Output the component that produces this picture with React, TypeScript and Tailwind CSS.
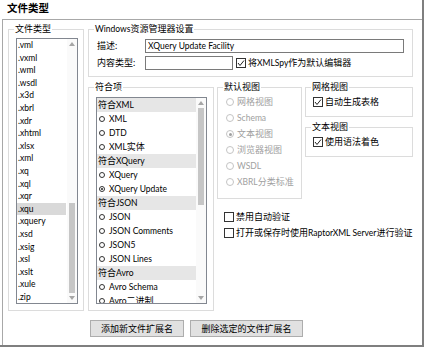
import React from 'react';

const fileTypes = [
  '.vml', '.vxml', '.wml', '.wsdl', '.x3d', '.xbrl', '.xdr', '.xhtml', '.xlsx', '.xml', '.xq',
  '.xql', '.xqr', '.xqu', '.xquery', '.xsd', '.xsig', '.xsl', '.xslt', '.xule', '.zip',
];

type Row = { label: string; header?: boolean; checked?: boolean };

const conformance: Row[] = [
  { label: '符合XML', header: true },
  { label: 'XML' },
  { label: 'DTD' },
  { label: 'XML实体' },
  { label: '符合XQuery', header: true },
  { label: 'XQuery' },
  { label: 'XQuery Update', checked: true },
  { label: '符合JSON', header: true },
  { label: 'JSON' },
  { label: 'JSON Comments' },
  { label: 'JSON5' },
  { label: 'JSON Lines' },
  { label: '符合Avro', header: true },
  { label: 'Avro Schema' },
  { label: 'Avro二进制' },
];

const views = [
  { label: '网格视图' },
  { label: 'Schema' },
  { label: '文本视图', checked: true },
  { label: '浏览器视图' },
  { label: 'WSDL' },
  { label: 'XBRL分类标准' },
];

// latin runs are set a touch smaller than the CJK runs, like the Segoe/YaHei mix
function T({ s }: { s: string }) {
  return (
    <>
      {s.split(/([\u4e00-\u9fff]+)/).map((part, i) =>
        part === '' ? null : /[\u4e00-\u9fff]/.test(part) ? (
          <span key={i}>{part}</span>
        ) : (
          <span key={i} className="text-[8.5px]">{part}</span>
        ),
      )}
    </>
  );
}

function Group({ label, className, children }: { label: string; className: string; children?: React.ReactNode }) {
  return (
    <div className={`flex flex-col border border-[#dcdcdc] ${className}`}>
      <span className="-mt-[7px] ml-[5px] self-start bg-white px-[1px] text-[9px] leading-[12px] text-black">
        <T s={label} />
      </span>
      {children}
    </div>
  );
}

function Check({ checked }: { checked?: boolean }) {
  return (
    <span className="flex h-[10px] w-[10px] shrink-0 items-center justify-center border border-[#333] bg-white">
      {checked && (
        <svg width="8" height="8" viewBox="0 0 8 8">
          <polyline points="1,4 3,6.5 7,1.5" fill="none" stroke="#222" strokeWidth="1" />
        </svg>
      )}
    </span>
  );
}

function Arrow({ up }: { up?: boolean }) {
  return (
    <div className="flex h-[10px] w-full items-center justify-center">
      <svg width="6" height="4" viewBox="0 0 6 4">
        <polygon points={up ? '0,4 6,4 3,0' : '0,0 6,0 3,4'} fill="#a6a6a6" />
      </svg>
    </div>
  );
}

export default function App() {
  return (
    <div className="h-[347px] w-[424px] border-b-2 border-r-2 border-[#7f7f7f] bg-white font-['Lato','Noto_Sans_CJK_SC',sans-serif] text-black flex flex-col">
      <div className="h-[19px] shrink-0 pl-[7px] text-[10.5px] font-bold leading-[17px]">文件类型</div>

      <div className="ml-[2px] flex flex-1 flex-col border-l border-t border-[#a8a8a8]">
        <div className="ml-[5px] mt-[9px] flex">
          {/* 文件类型 */}
          <Group label="文件类型" className="h-[282px] w-[76px]">
            <div className="ml-[7px] mt-[3px] flex h-[266px] w-[62px] border border-[#828790]">
              <div className="flex-1 overflow-hidden">
                {fileTypes.map((t) => (
                  <div
                    key={t}
                    className={`h-[12.6px] w-[49px] pl-[1px] text-[8.5px] leading-[12.6px] ${t === '.xqu' ? 'bg-[#d9d9d9]' : ''}`}
                  >
                    {t}
                  </div>
                ))}
              </div>
              <div className="flex w-[10px] flex-col items-center bg-[#fafafa]">
                <Arrow up />
                <div className="flex-1" />
                <div className="h-[90px] w-[6px] bg-[#c6c6c6]" />
                <Arrow />
              </div>
            </div>
          </Group>

          <div className="ml-[4px] flex w-[325px] flex-col">
            {/* Windows资源管理器设置 */}
            <Group label="Windows资源管理器设置" className="h-[48px] w-full">
              <div className="mt-[4px] flex h-[14px] items-center pl-[8px] text-[9px]">
                <span className="w-[48px]">描述:</span>
                <div className="flex h-[14px] w-[259px] items-center border border-[#7a7a7a] pl-[2px] text-[8.5px] leading-[12px]">
                  XQuery Update Facility
                </div>
              </div>
              <div className="mt-[3px] flex h-[14px] items-center pl-[8px] text-[9px]">
                <span className="w-[48px]">内容类型:</span>
                <div className="h-[14px] w-[88px] border border-[#7a7a7a]" />
                <span className="ml-[3px]"><Check checked /></span>
                <span className="ml-[2px]"><T s="将XMLSpy作为默认编辑器" /></span>
              </div>
            </Group>

            <div className="mt-[10px] flex">
              {/* 符合项 */}
              <Group label="符合项" className="h-[224px] w-[126px]">
                <div className="ml-[7px] mt-[4px] flex h-[207px] w-[111px] border border-[#828790]">
                  <div className="flex-1 overflow-hidden">
                    {conformance.map((r) =>
                      r.header ? (
                        <div key={r.label} className="flex h-[14px] items-center bg-[#e6e6e6] pl-[1px] text-[9px]">
                          <T s={r.label} />
                        </div>
                      ) : (
                        <div key={r.label} className="flex h-[14px] items-center pl-[2px] text-[9px]">
                          <span className="flex h-[6px] w-[6px] shrink-0 items-center justify-center rounded-full border border-[#333]">
                            {r.checked && <span className="h-[2px] w-[2px] rounded-full bg-[#222]" />}
                          </span>
                          <span className="ml-[4px]"><T s={r.label} /></span>
                        </div>
                      ),
                    )}
                  </div>
                  <div className="flex w-[10px] flex-col items-center bg-[#fafafa]">
                    <Arrow up />
                    <div className="h-[97px] w-[6px] bg-[#c6c6c6]" />
                    <div className="flex-1" />
                    <Arrow />
                  </div>
                </div>
              </Group>

              <div className="ml-[3px] flex w-[196px] flex-col">
                <div className="flex">
                  {/* 默认视图 */}
                  <Group label="默认视图" className="h-[112px] w-[85px]">
                    <div className="mt-[1px]">
                      {views.map((v) => (
                        <div key={v.label} className="flex h-[16px] items-center pl-[8px] text-[9px] text-[#a0a0a0]">
                          <span className="flex h-[8px] w-[8px] shrink-0 items-center justify-center rounded-full border border-[#c4c4c4] bg-white">
                            {v.checked && <span className="h-[3px] w-[3px] rounded-full bg-[#a0a0a0]" />}
                          </span>
                          <span className="ml-[3px]"><T s={v.label} /></span>
                        </div>
                      ))}
                    </div>
                  </Group>

                  <div className="ml-[3px] flex w-[108px] flex-col">
                    <Group label="网格视图" className="h-[30px] w-full">
                      <div className="mt-[1px] flex h-[16px] items-center pl-[7px] text-[9px]">
                        <Check checked />
                        <span className="ml-[2px]">自动生成表格</span>
                      </div>
                    </Group>
                    <Group label="文本视图" className="mt-[10px] h-[30px] w-full">
                      <div className="mt-[1px] flex h-[16px] items-center pl-[7px] text-[9px]">
                        <Check checked />
                        <span className="ml-[2px]">使用语法着色</span>
                      </div>
                    </Group>
                  </div>
                </div>

                <div className="mt-[10px] pl-[7px] text-[9px]">
                  <div className="flex h-[16px] items-center">
                    <Check />
                    <span className="ml-[2px]">禁用自动验证</span>
                  </div>
                  <div className="flex h-[16px] items-center">
                    <Check />
                    <span className="ml-[2px] whitespace-nowrap">
                      <T s="打开或保存时使用RaptorXML Server进行验证" />
                    </span>
                  </div>
                </div>
              </div>
            </div>
          </div>
        </div>

        <div className="ml-[87px] mt-[9px] flex text-[9px]">
          <button className="flex h-[17px] w-[94px] items-center justify-center border border-[#adadad] bg-[#e1e1e1]">
            添加新文件扩展名
          </button>
          <button className="ml-[6px] flex h-[17px] w-[113px] items-center justify-center border border-[#adadad] bg-[#e1e1e1]">
            删除选定的文件扩展名
          </button>
        </div>
      </div>
    </div>
  );
}
